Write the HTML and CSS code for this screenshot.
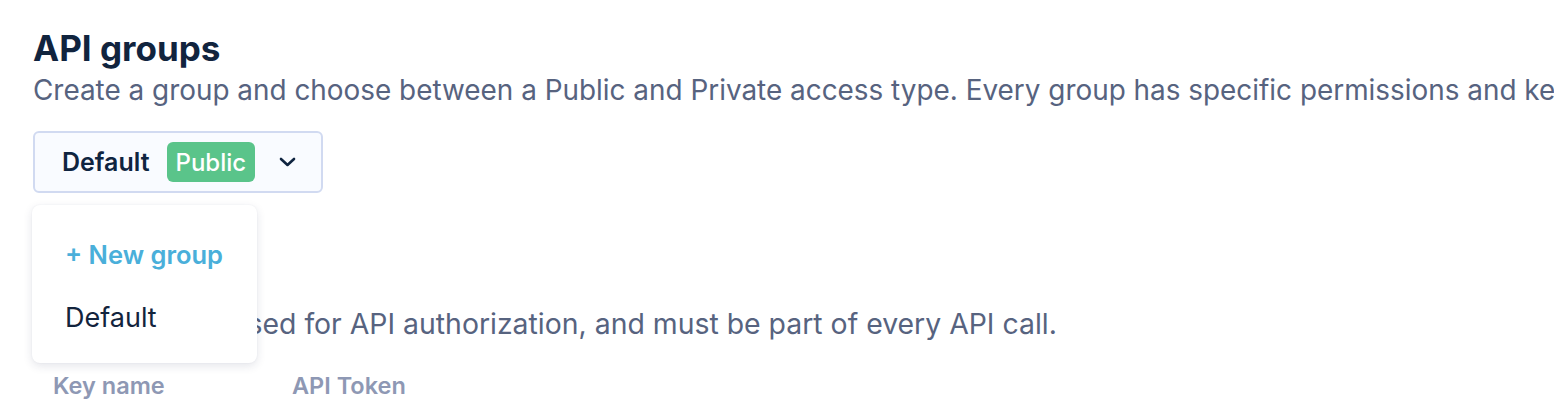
FILE: index.html
```
<!DOCTYPE html>
<html lang="en">
<head>
<meta charset="utf-8">
<title>API groups</title>
<link rel="stylesheet" href="styles.css">
</head>
<body>
<main class="page">
  <section class="groups">
    <h1 class="title">API groups</h1>
    <p class="subtitle">Create a group and choose between a Public and Private access type. Every group has specific permissions and keys.</p>
    <div class="select-wrap">
      <button class="select" type="button">
        <span class="select-label">Default</span>
        <span class="badge">Public</span>
        <svg class="chevron" width="17" height="10" viewBox="0 0 17 10" aria-hidden="true"><path d="M2 2 L8.5 8 L15 2" fill="none" stroke="currentColor" stroke-width="2.6" stroke-linecap="round" stroke-linejoin="round"/></svg>
      </button>
      <ul class="menu">
        <li class="menu-item new">+ New group</li>
        <li class="menu-item">Default</li>
      </ul>
    </div>
  </section>
  <section class="keys">
    <h2 class="keys-title">API keys</h2>
    <p class="keys-text">The API key is used for API authorization, and must be part of every API call.</p>
    <div class="table-head">
      <span class="col col-name">Key name</span>
      <span class="col col-token">API Token</span>
    </div>
  </section>
</main>
</body>
</html>
```
FILE: styles.css
```
* { box-sizing: border-box; }
html, body { margin: 0; padding: 0; background: #ffffff; }
body {
  font-family: Inter, "Noto Sans", "Liberation Sans", sans-serif;
  overflow: hidden;
  width: 1554px;
  height: 408px;
}
.page {
  padding: 27px 0 0 33px;
  white-space: nowrap;
}
.title {
  margin: 0;
  font-size: 35px;
  line-height: 42px;
  font-weight: 700;
  color: #11243e;
}
.subtitle {
  margin: 4px 0 0;
  font-size: 27.9px;
  line-height: 34px;
  font-weight: 400;
  color: #57637f;
}
.select-wrap {
  position: relative;
  margin-top: 24px;
}
.select {
  display: flex;
  align-items: center;
  width: 290px;
  height: 62px;
  padding: 0 25px 0 27px;
  border: 2px solid #d1daf1;
  border-radius: 6px;
  background: #f9fbff;
  font-family: inherit;
  color: #0f2440;
  cursor: pointer;
}
.select-label {
  font-size: 25px;
  font-weight: 600;
}
.badge {
  margin-left: 17px;
  height: 40px;
  padding: 0 9px;
  display: flex;
  align-items: center;
  border-radius: 6px;
  background: #5ac48a;
  color: #ffffff;
  font-size: 24px;
  font-weight: 500;
}
.chevron {
  margin-left: auto;
  color: #0f2440;
}
.menu {
  position: absolute;
  top: 74px;
  left: -1px;
  width: 225px;
  height: 158px;
  margin: 0;
  padding: 34px 0 0 33px;
  list-style: none;
  background: #ffffff;
  border-radius: 8px;
  box-shadow: 0 3px 10px rgba(30, 45, 80, 0.12), 0 0 2px rgba(30, 45, 80, 0.06);
  z-index: 2;
}
.menu-item {
  font-size: 27px;
  line-height: 32px;
  color: #13243d;
}
.menu-item.new {
  font-size: 25.5px;
  color: #4aafda;
  font-weight: 600;
  margin-bottom: 31px;
}
.keys {
  margin-top: 70px;
}
.keys-title {
  margin: 0;
  font-size: 28px;
  line-height: 36px;
  font-weight: 700;
  color: #11243e;
}
.keys-text {
  margin: 8px 0 0;
  font-size: 28.4px;
  line-height: 34px;
  color: #57637f;
}
.table-head {
  display: flex;
  margin-top: 30px;
  padding-left: 20px;
  font-size: 23.5px;
  line-height: 30px;
  font-weight: 600;
  color: #8e98b4;
}
.col-name { width: 239px; }
```
